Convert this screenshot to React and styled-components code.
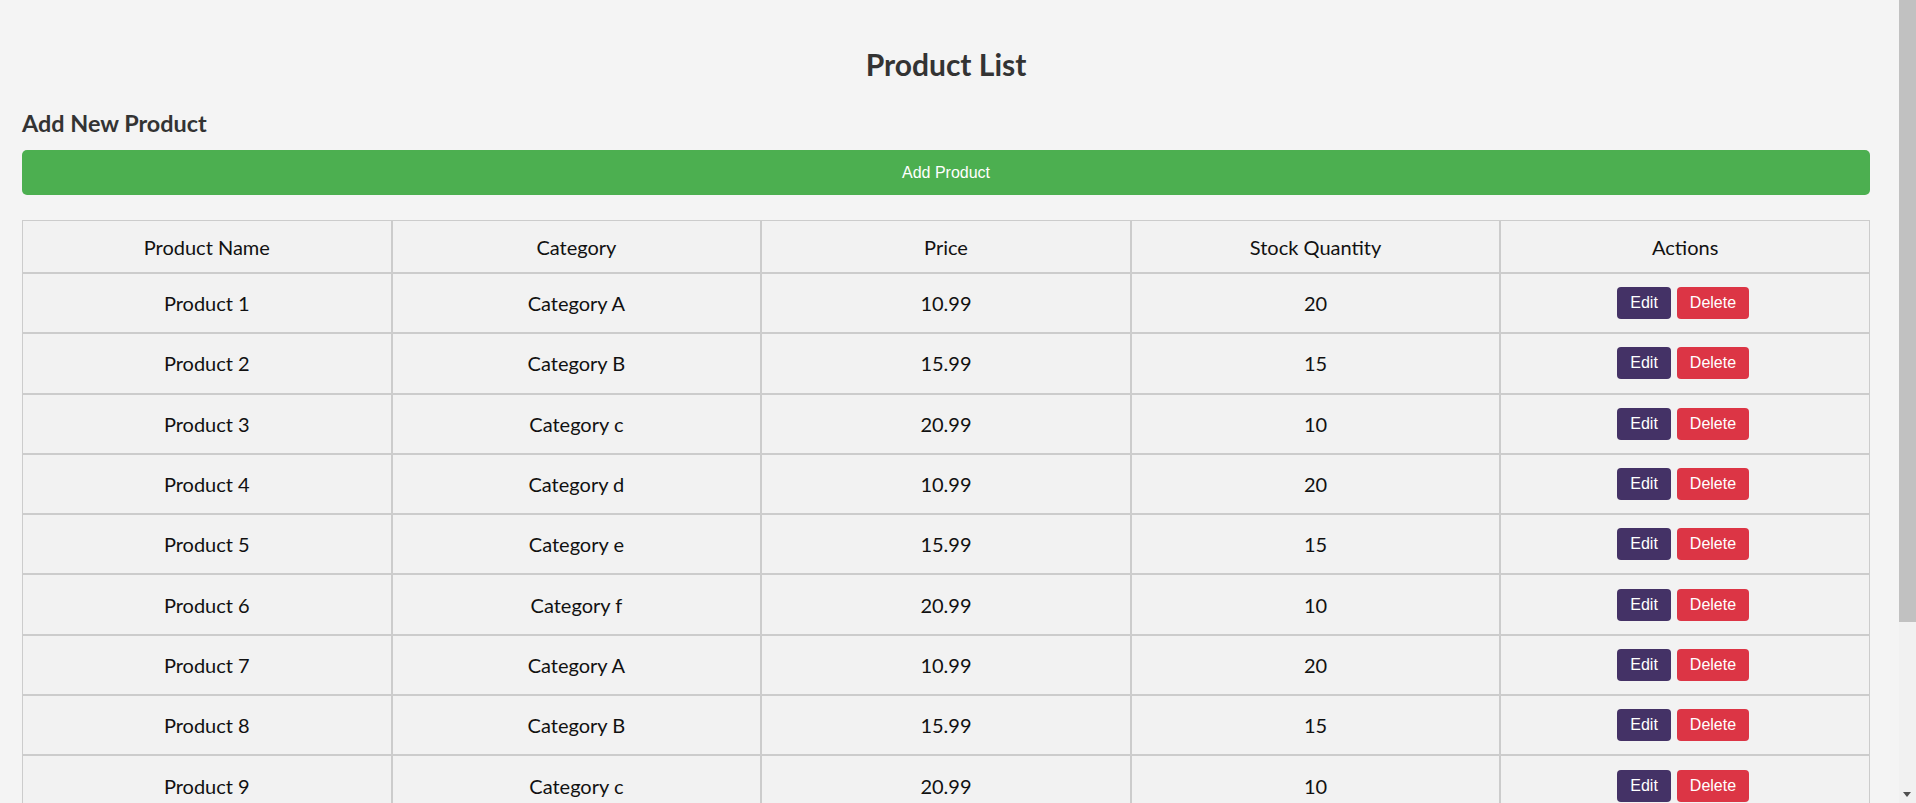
import React from "react"
import styled, { createGlobalStyle } from "styled-components"

const GlobalStyle = createGlobalStyle`
  html, body {
    margin: 0;
    overflow: hidden;
  }
  body {
    background: #f4f4f4;
    font-family: Lato, "Segoe UI", "Noto Sans", sans-serif;
    color: #111;
  }
`

const Page = styled.div`
  width: 1848px;
  margin-left: 22px;
  padding-bottom: 10px;
`

const Title = styled.h2`
  margin: 46px 0 0;
  font-size: 30px;
  line-height: 36px;
  font-weight: 700;
  color: #333;
  text-align: center;
`

const SectionTitle = styled.h3`
  margin: 27px 0 0;
  font-size: 23.4px;
  line-height: 28px;
  font-weight: 700;
  color: #333;
`

const AddButton = styled.button`
  display: block;
  width: 100%;
  height: 45px;
  margin-top: 13px;
  border: none;
  border-radius: 5px;
  background: #4caf50;
  color: #fff;
  font-family: "Liberation Sans", Arial, sans-serif;
  font-size: 16px;
  cursor: pointer;
`

const Table = styled.table`
  width: 100%;
  margin-top: 25px;
  table-layout: fixed;
  border-collapse: separate;
  border-spacing: 0;
`

const HeadRow = styled.tr`
  height: 53px;
`

const BodyRow = styled.tr`
  height: 60.3px;
`

const HeadCell = styled.th`
  border: 1px solid #ccc;
  background: #f2f2f2;
  padding: 0 12px;
  font-size: 20px;
  font-weight: 400;
  text-align: center;
  vertical-align: middle;
`

const Cell = styled.td`
  border: 1px solid #ccc;
  background: #f2f2f2;
  padding: 0 12px;
  font-size: 20px;
  text-align: center;
  vertical-align: middle;
`

const ActionGroup = styled.div`
  display: flex;
  justify-content: center;
  gap: 6px;
  padding-right: 4px;
`

const ActionButton = styled.button`
  height: 32px;
  padding: 0 13px;
  border: none;
  border-radius: 4px;
  background: ${(p) => (p.$variant === "danger" ? "#dc3545" : "#443266")};
  color: #fff;
  font-family: "Liberation Sans", Arial, sans-serif;
  font-size: 16px;
  cursor: pointer;
`

// drawn scrollbar, the page itself does not scroll in the capture
const ScrollTrack = styled.div`
  position: fixed;
  top: 0;
  right: 0;
  width: 17px;
  height: 100vh;
  background: #f1f1f1;
`

const ScrollThumb = styled.div`
  width: 17px;
  height: 622px;
  background: #c1c1c1;
`

const ScrollArrow = styled.div`
  position: absolute;
  bottom: 6px;
  left: 4px;
  width: 0;
  height: 0;
  border-left: 4.5px solid transparent;
  border-right: 4.5px solid transparent;
  border-top: 5px solid #505050;
`

const categories = ["Category A", "Category B", "Category c", "Category d", "Category e", "Category f"]
const prices = ["10.99", "15.99", "20.99"]
const stock = [20, 15, 10]

const products = Array.from({ length: 12 }, (_, i) => ({
  name: `Product ${i + 1}`,
  category: categories[i % 6],
  price: prices[i % 3],
  stock: stock[i % 3],
}))

const columns = ["Product Name", "Category", "Price", "Stock Quantity", "Actions"]

const App = () => {
  return (
    <>
      <GlobalStyle />
      <Page>
        <Title>Product List</Title>
        <SectionTitle>Add New Product</SectionTitle>
        <AddButton>Add Product</AddButton>
        <Table>
          <thead>
            <HeadRow>
              {columns.map((col) => (
                <HeadCell key={col}>{col}</HeadCell>
              ))}
            </HeadRow>
          </thead>
          <tbody>
            {products.map((item) => (
              <BodyRow key={item.name}>
                <Cell>{item.name}</Cell>
                <Cell>{item.category}</Cell>
                <Cell>{item.price}</Cell>
                <Cell>{item.stock}</Cell>
                <Cell>
                  <ActionGroup>
                    <ActionButton>Edit</ActionButton>
                    <ActionButton $variant="danger">Delete</ActionButton>
                  </ActionGroup>
                </Cell>
              </BodyRow>
            ))}
          </tbody>
        </Table>
      </Page>
      <ScrollTrack>
        <ScrollThumb />
        <ScrollArrow />
      </ScrollTrack>
    </>
  )
}

export default App
